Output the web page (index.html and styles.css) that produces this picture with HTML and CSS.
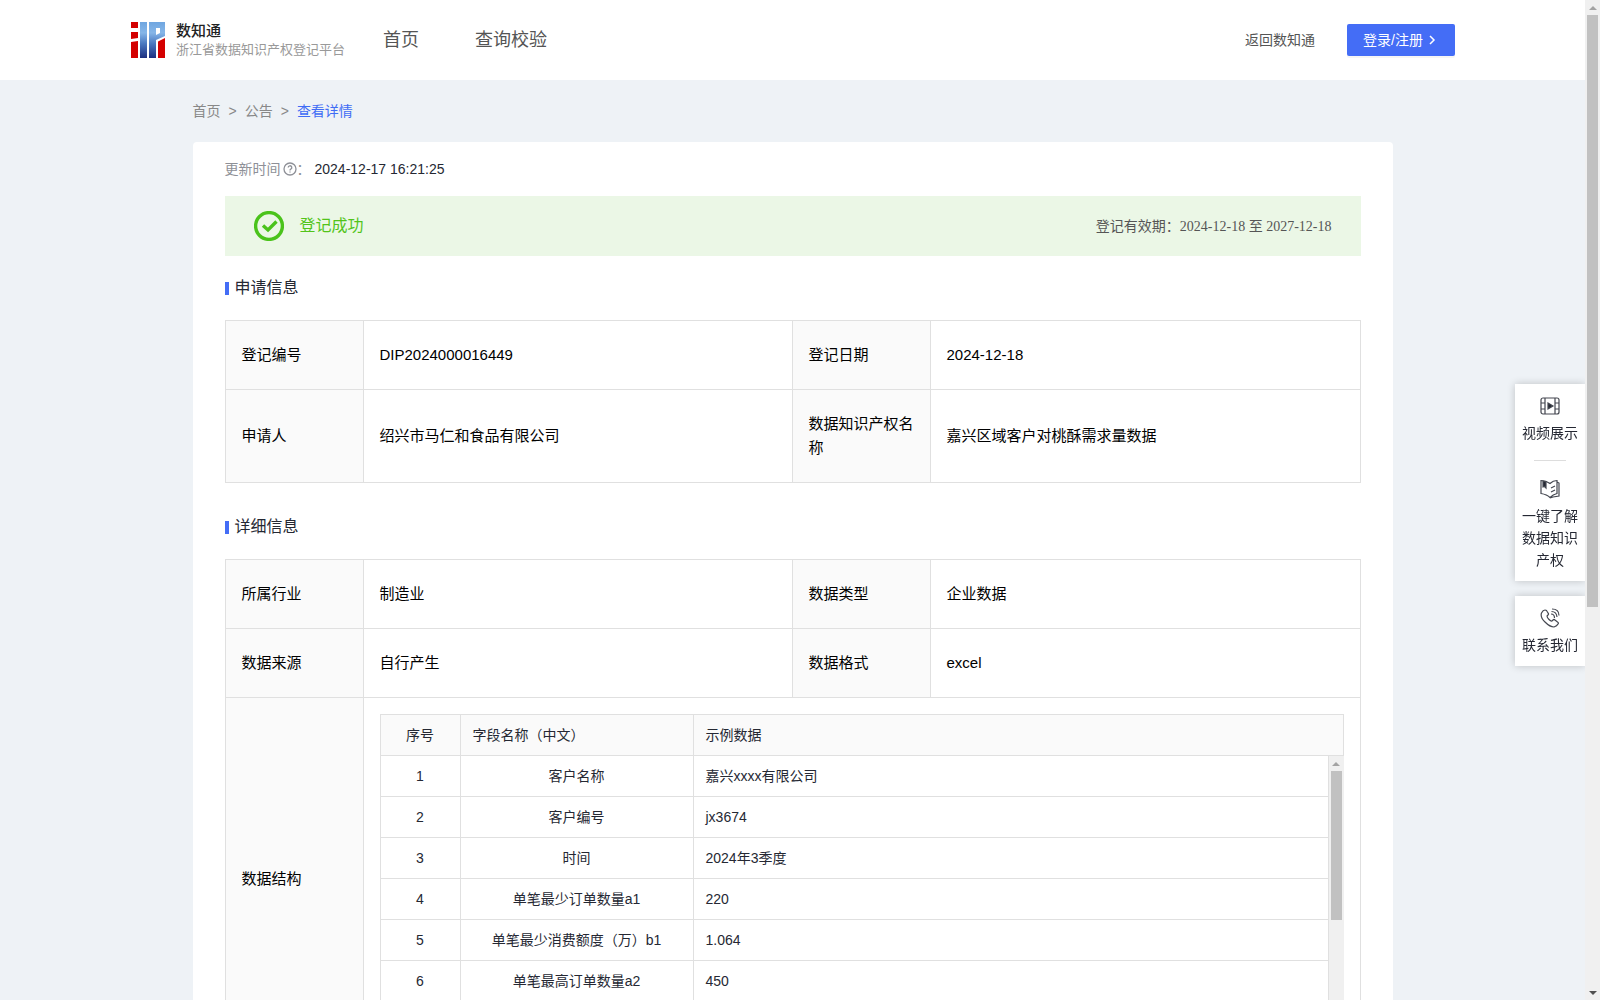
FILE: index.html
```
<!DOCTYPE html>
<html lang="zh-CN">
<head>
<meta charset="utf-8">
<title>数知通</title>
<link rel="stylesheet" href="styles.css">
</head>
<body>
<div class="viewport">
<header class="header">
  <a class="brand" href="#">
    <svg class="brand-logo" viewBox="0 0 34 36" aria-hidden="true">
      <defs><linearGradient id="blue" x1="0" y1="0" x2="0" y2="1"><stop offset="0" stop-color="#6fa6e0"/><stop offset=".3" stop-color="#86b6e8"/><stop offset=".6" stop-color="#4a78c0"/><stop offset="1" stop-color="#1d2f80"/></linearGradient></defs>
      <path fill="#d40000" d="M0 0h7v6H0zM0 10h7v6l-7 1zM0 20l7-1v17H0zM27 19.500l7-3.500v20h-7z"/>
      <path fill="url(#blue)" fill-rule="evenodd" d="M9 0h7v36H9zM18 0h16v14l-9 4v18h-7zM25 6v7l4-2V6z"/>
    </svg>
    <span class="brand-text"><strong class="brand-name">数知通</strong><span class="brand-sub">浙江省数据知识产权登记平台</span></span>
  </a>
  <nav class="nav"><a href="#">首页</a><a href="#">查询校验</a></nav>
  <a class="back" href="#">返回数知通</a>
  <button class="login" type="button">登录/注册
    <svg class="login-arrow" viewBox="0 0 14 14" aria-hidden="true"><path d="M5 3l4 4-4 4"/></svg>
  </button>
</header>
<main class="main">
  <nav class="crumbs"><a href="#">首页</a><span>&gt;</span><a href="#">公告</a><span>&gt;</span><a class="current" href="#">查看详情</a></nav>
  <article class="card">
    <p class="updated"><span class="muted">更新时间</span><svg class="help" viewBox="0 0 14 14" aria-hidden="true"><circle cx="7" cy="7" r="6"/><path d="M5.200 5.600a1.800 1.800 0 1 1 2.600 1.600q-.8.400-.8 1.200M7 9.600v1"/></svg><span class="muted">：</span><time>2024-12-17 16:21:25</time></p>
    <div class="banner">
      <svg class="ok" viewBox="0 0 30 30" aria-hidden="true"><circle cx="15" cy="15" r="13.400"/><path d="M9 14.500l5 4.500 8.500-8.500"/></svg>
      <span class="banner-state">登记成功</span>
      <span class="banner-term">登记有效期：<span class="dates">2024-12-18 至 2027-12-18</span></span>
    </div>
    <h2 class="title">申请信息</h2>
    <table class="info">
      <colgroup><col class="c-label"><col class="c-value"><col class="c-label"><col></colgroup>
      <tr><th>登记编号</th><td>DIP2024000016449</td><th>登记日期</th><td>2024-12-18</td></tr>
      <tr><th>申请人</th><td>绍兴市马仁和食品有限公司</td><th>数据知识产权名称</th><td>嘉兴区域客户对桃酥需求量数据</td></tr>
    </table>
    <h2 class="title">详细信息</h2>
    <table class="info">
      <colgroup><col class="c-label"><col class="c-value"><col class="c-label"><col></colgroup>
      <tr><th>所属行业</th><td>制造业</td><th>数据类型</th><td>企业数据</td></tr>
      <tr><th>数据来源</th><td>自行产生</td><th>数据格式</th><td>excel</td></tr>
      <tr><th>数据结构</th><td colspan="3" class="nest">
        <table class="fields">
          <colgroup><col class="f-no"><col class="f-name"><col></colgroup>
          <tr><th>序号</th><th>字段名称（中文）</th><th>示例数据</th></tr>
        </table>
        <div class="fields-scroll">
          <div class="fields-rows">
            <table class="fields">
              <colgroup><col class="f-no"><col class="f-name"><col></colgroup>
              <tr><td>1</td><td>客户名称</td><td>嘉兴xxxx有限公司</td></tr>
              <tr><td>2</td><td>客户编号</td><td>jx3674</td></tr>
              <tr><td>3</td><td>时间</td><td>2024年3季度</td></tr>
              <tr><td>4</td><td>单笔最少订单数量a1</td><td>220</td></tr>
              <tr><td>5</td><td>单笔最少消费额度（万）b1</td><td>1.064</td></tr>
              <tr><td>6</td><td>单笔最高订单数量a2</td><td>450</td></tr>
            </table>
          </div>
          <div class="scrollbar" aria-hidden="true"><div class="track"><div class="thumb" style="height:58%"></div></div></div>
        </div>
      </td></tr>
    </table>
  </article>
</main>
</div>
<aside class="tools">
  <div class="tool-box">
    <a class="tool" href="#"><svg viewBox="0 0 20 20" aria-hidden="true"><rect x="1" y="2" width="18" height="16" rx="2"/><path d="M5 2v16M15 2v16M1 7h4M1 13h4M15 7h4M15 13h4"/><path class="solid" d="M8 7l5 3-5 3z"/></svg>视频展示</a>
    <a class="tool tool-next" href="#"><svg viewBox="0 0 20 20" aria-hidden="true"><path d="M1 1.500q5 0 9 3 3-3 7-3v13q-4 1-7 4-3-3-9-4zM17 3l2 1v13l-6 1-3 1M11 9l4-2M11 13l4-2"/><path class="solid" d="M3 2l3 1v6L4.500 7.500 3 8z"/></svg>一键了解数据知识产权</a>
  </div>
  <div class="tool-box">
    <a class="tool" href="#"><svg viewBox="0 0 20 20" aria-hidden="true"><path d="M5 2Q3 2 1.500 5 0 9 5 14t9 5q3-1 4-3 1-1-.500-2L15 12q-1-1-2 0l-1 1q-1 .500-3-1.500T7 8l1-1q1-1 0-2L6.500 2.500Q6 2 5 2zM11 6q3.500 0 3.500 4M11.500 3.500q5 0 5.500 5.500M12 1q7 0 7 6.500"/></svg>联系我们</a>
  </div>
</aside>
<div class="scrollbar page-scrollbar" aria-hidden="true"><div class="track"><div class="thumb" style="height:61%"></div></div></div>
</body>
</html>
```
FILE: styles.css
```
* { box-sizing: border-box; }
body { display: grid; grid-template-columns: minmax(0, 1fr) 15px; height: 100vh; margin: 0; background: #eef2f6; color: #252833; font: 14px/22px "Liberation Sans", "Noto Sans CJK SC", sans-serif; }
a { color: inherit; text-decoration: none; }

.viewport { min-height: 0; overflow-y: auto; scrollbar-width: none; }

.header { display: flex; align-items: center; height: 80px; padding: 0 130px; background: #fff; color: #555; }
.brand { display: flex; align-items: center; gap: 10px; }
.brand-logo { width: 36px; height: 36px; }
.brand-text { display: flex; flex-direction: column; }
.brand-name { font-size: 15px; line-height: 20px; font-weight: 500; color: #222; }
.brand-sub { font-size: 13px; line-height: 18px; color: #999; }
.nav { display: flex; gap: 56px; margin: 0 auto 0 38px; font-size: 18px; }
.login { display: flex; align-items: center; gap: 2px; height: 32px; margin-left: 32px; padding: 0 16px; border: 0; border-radius: 2px; background: #446df6; color: #fff; font: inherit; box-shadow: 0 2px 0 rgba(0, 0, 0, .04); }
.login-arrow { width: 14px; height: 14px; fill: none; stroke: currentColor; stroke-width: 1.5; }

.main { max-width: 1200px; margin: 0 auto; }
.crumbs { display: flex; gap: 8px; padding: 20px 0; color: #888; }
.crumbs .current { color: #3f6cf5; }
.card { padding: 16px 32px 32px; border-radius: 4px; background: #fff; }
.updated { display: flex; align-items: center; margin: 0 0 16px; }
.updated time { margin-left: 4px; }
.muted { color: #8e9097; }
.help { width: 14px; height: 14px; margin-left: 2px; fill: none; stroke: #8e9097; stroke-width: 1.3; }
.banner { display: flex; align-items: center; height: 60px; padding: 0 29px; background: #ebf7e6; }
.ok { width: 30px; height: 30px; fill: none; stroke: #4ac31b; stroke-width: 3.4; }
.banner-state { margin-left: 16px; font-size: 16px; color: #52c41a; }
.banner-term { margin-left: auto; color: #555; }
.dates { font-family: "Liberation Serif", "Noto Sans CJK SC", serif; }
.title { display: flex; align-items: center; gap: 6px; margin: 20px 0; font-size: 16px; line-height: 24px; font-weight: 400; }
.title::before { content: ""; width: 4px; height: 13px; background: #446df6; }

.info, .fields { width: 100%; table-layout: fixed; border-collapse: collapse; }
.info { color: #000; font-size: 15px; line-height: 24px; }
.info + .title { margin-top: 32px; }
.info th, .info td { height: 69px; padding: 22px 16px; border: 1px solid #e0e0e0; font-weight: 400; text-align: left; }
.info th { background: #fafafa; }
.c-label { width: 138px; }
.c-value { width: 429px; }
.info .nest { padding: 16px; }
.info .fields { color: #252833; font-size: 14px; line-height: 20px; }
.info .fields th, .info .fields td { height: 41px; padding: 10px 12px; }
.info .fields td:nth-child(-n+2), .info .fields th:first-child { text-align: center; }
.f-no { width: 80px; }
.f-name { width: 233px; }
.fields-scroll { display: grid; grid-template-columns: minmax(0, 1fr) 15px; height: 288px; margin-top: -1px; }
.fields-rows { min-height: 0; overflow-y: auto; scrollbar-width: none; }
.fields-scroll .scrollbar { margin-top: 1px; }

.scrollbar { display: flex; flex-direction: column; align-items: center; justify-content: space-between; background: #f0f0f0; }
.scrollbar::before, .scrollbar::after { content: ""; margin: 6px 0 5px; border: 4px solid transparent; border-width: 0 4px 4px; border-bottom-color: #a3a3a3; }
.scrollbar::after { border-width: 4px 4px 0; border-top-color: #505050; }
.track { flex: 1; width: 11px; }
.thumb { background: #c1c1c1; }
.page-scrollbar { position: relative; z-index: 2; }

.tools { position: fixed; top: 384px; right: 15px; width: 70px; display: grid; gap: 15px; }
.tool-box { padding: 12px 7px 10px; background: #fff; box-shadow: 0 0 8px rgba(0, 0, 0, .2); }
.tool { display: flex; flex-direction: column; align-items: center; gap: 6px; text-align: center; }
.tool svg { width: 20px; height: 20px; fill: none; stroke: #444750; stroke-width: 1.2; }
.tool .solid { fill: #252833; }
.tool-next::before { content: ""; width: 32px; height: 1px; margin: 16px 0 12px; background: #ddd; }
```
